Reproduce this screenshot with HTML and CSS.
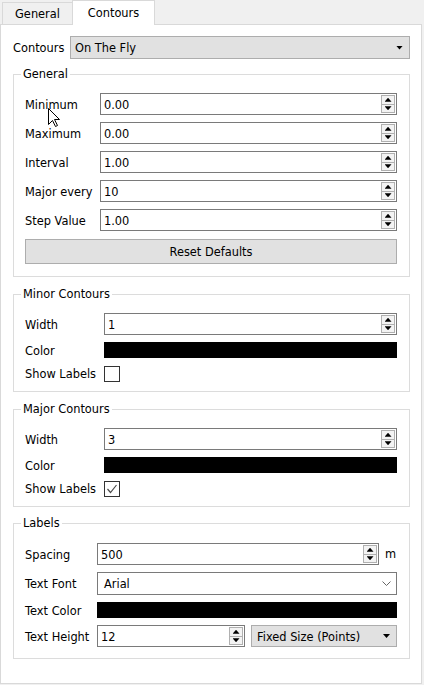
FILE: index.html
```html
<!DOCTYPE html>
<html>
<head>
<meta charset="utf-8">
<link rel="stylesheet" href="styles.css">
</head>
<body>
<div class="window">
  <div class="tabbar">
    <div class="tab">General</div>
    <div class="tab active">Contours</div>
  </div>
  <div class="panel">
    <div class="toprow">
      <span class="toplabel">Contours</span>
      <div class="combo gray">
        <span class="ctext">On The Fly</span>
        <span class="darrow"></span>
      </div>
    </div>

    <div class="group g-general">
      <div class="gtitle"><span>General</span></div>
      <div class="rows c75">
        <span class="lbl">Minimum</span>
        <div class="spin"><span class="val">0.00</span><span class="btns"><span class="b"><i class="up"></i></span><span class="b"><i class="dn"></i></span></span></div>
        <span class="lbl">Maximum</span>
        <div class="spin"><span class="val">0.00</span><span class="btns"><span class="b"><i class="up"></i></span><span class="b"><i class="dn"></i></span></span></div>
        <span class="lbl">Interval</span>
        <div class="spin"><span class="val">1.00</span><span class="btns"><span class="b"><i class="up"></i></span><span class="b"><i class="dn"></i></span></span></div>
        <span class="lbl">Major every</span>
        <div class="spin"><span class="val">10</span><span class="btns"><span class="b"><i class="up"></i></span><span class="b"><i class="dn"></i></span></span></div>
        <span class="lbl">Step Value</span>
        <div class="spin"><span class="val">1.00</span><span class="btns"><span class="b"><i class="up"></i></span><span class="b"><i class="dn"></i></span></span></div>
      </div>
      <div class="button">Reset Defaults</div>
    </div>

    <div class="group g-minor">
      <div class="gtitle"><span>Minor Contours</span></div>
      <div class="rows c79 mixed">
        <span class="lbl">Width</span>
        <div class="spin"><span class="val">1</span><span class="btns"><span class="b"><i class="up"></i></span><span class="b"><i class="dn"></i></span></span></div>
        <span class="lbl">Color</span>
        <div class="colorbar"></div>
        <span class="lbl">Show Labels</span>
        <div class="cbwrap"><span class="checkbox"></span></div>
      </div>
    </div>

    <div class="group g-major">
      <div class="gtitle"><span>Major Contours</span></div>
      <div class="rows c79 mixed">
        <span class="lbl">Width</span>
        <div class="spin"><span class="val">3</span><span class="btns"><span class="b"><i class="up"></i></span><span class="b"><i class="dn"></i></span></span></div>
        <span class="lbl">Color</span>
        <div class="colorbar"></div>
        <span class="lbl">Show Labels</span>
        <div class="cbwrap"><span class="checkbox"><svg width="14" height="14" viewBox="0 0 14 14"><polyline points="2.5,7 5.5,10.5 11.5,3" fill="none" stroke="#4a4a4a" stroke-width="1.2"/></svg></span></div>
      </div>
    </div>

    <div class="group g-labels">
      <div class="gtitle"><span>Labels</span></div>
      <div class="rows c72 lrows">
        <span class="lbl">Spacing</span>
        <div class="withunit">
          <div class="spin"><span class="val">500</span><span class="btns"><span class="b"><i class="up"></i></span><span class="b"><i class="dn"></i></span></span></div>
          <span class="unit">m</span>
        </div>
        <span class="lbl">Text Font</span>
        <div class="combo white">
          <span class="ctext">Arial</span>
          <svg class="chev" width="9" height="6" viewBox="0 0 9 6"><polyline points="0.5,0.5 4.5,4.5 8.5,0.5" fill="none" stroke="#666" stroke-width="1"/></svg>
        </div>
        <span class="lbl">Text Color</span>
        <div class="colorbar"></div>
        <span class="lbl">Text Height</span>
        <div class="pair">
          <div class="spin short"><span class="val">12</span><span class="btns"><span class="b"><i class="up"></i></span><span class="b"><i class="dn"></i></span></span></div>
          <div class="combo gray small">
            <span class="ctext">Fixed Size (Points)</span>
            <span class="darrow"></span>
          </div>
        </div>
      </div>
    </div>
  </div>

  <svg class="cursor" width="13" height="20" viewBox="0 0 13 20">
    <path d="M0.5,0.5 L0.5,16.5 L4.5,12.5 L7.5,18.5 L9.5,17.5 L6.5,11.5 L11.5,11.5 Z" fill="#fff" stroke="#000" stroke-width="1" stroke-linejoin="miter"/>
  </svg>
</div>
</body>
</html>
```

FILE: styles.css
```css
* { box-sizing: border-box; }
html, body { margin: 0; padding: 0; }
body {
  background: #f0f0f0;
  font-family: "DejaVu Sans", Verdana, sans-serif;
  font-size: 11.4px;
  color: #000;
}
.window {
  width: 424px;
  height: 685px;
  position: relative;
  overflow: hidden;
}

/* tabs */
.tabbar {
  display: flex;
  align-items: flex-end;
  height: 24px;
  padding-left: 2px;
}
.tab {
  width: 71px;
  height: 22px;
  border: 1px solid #d9d9d9;
  border-bottom: none;
  background: #f0f0f0;
  display: flex;
  align-items: center;
  justify-content: center;
  padding-top: 1px;
}
.tab.active {
  width: 83px;
  height: 25px;
  margin-left: -1px;
  margin-bottom: -1px;
  background: #fff;
  position: relative;
  z-index: 1;
  padding-top: 0;
  padding-bottom: 1px;
}

/* panel */
.panel {
  width: 422px;
  height: 660px;
  background: #fff;
  border: 1px solid #d9d9d9;
  padding: 11px 11px 0 12px;
}
.toprow {
  display: flex;
  align-items: center;
  height: 23px;
}
.toplabel { width: 57px; padding-top: 1px; }

.combo {
  display: flex;
  align-items: center;
  justify-content: space-between;
  height: 23px;
  padding-left: 4px;
  padding-right: 6px;
}
.ctext { padding-top: 1px; }
.toprow .combo { flex: 1; }
.combo.gray {
  background: #e1e1e1;
  border: 1px solid #adadad;
}
.combo.white {
  background: #fff;
  border: 1px solid #7a7a7a;
  height: 23px;
  padding-left: 6px;
  padding-right: 5px;
}
.darrow {
  width: 7px;
  height: 4px;
  background: #000;
  clip-path: polygon(0 0, 100% 0, 50% 100%);
}

/* groups */
.group {
  border: 1px solid #dcdcdc;
  padding: 0 12px 12px 11px;
}
.g-general { margin-top: 15px; }
.g-minor { margin-top: 17px; padding-bottom: 9px; }
.g-major { margin-top: 17px; padding-bottom: 9px; }
.g-labels { margin-top: 16px; padding-bottom: 11px; }

.gtitle {
  height: 14px;
  line-height: 14px;
  margin-top: -8px;
  margin-bottom: 12px;
  margin-left: -4px;
}
.g-labels .gtitle { margin-bottom: 13px; }
.gtitle span {
  background: #fff;
  padding: 0 2px;
}

.rows {
  display: grid;
  row-gap: 7px;
  align-items: center;
}
.c75 { grid-template-columns: 75px 1fr; }
.c79 { grid-template-columns: 79px 1fr; }
.c72 { grid-template-columns: 72px 1fr; }
.mixed .cbwrap { margin-top: 1px; }
.lbl { white-space: nowrap; padding-top: 1px; }

/* spin box */
.spin {
  height: 22px;
  border: 1px solid #7a7a7a;
  background: #fff;
  display: flex;
  align-items: center;
  justify-content: space-between;
  padding-left: 3px;
}
.val { padding-top: 1px; }
.btns {
  width: 14px;
  height: 18px;
  margin-right: 1px;
  display: flex;
  flex-direction: column;
  border: 1px solid #b0b0b0;
  background: #f3f3f3;
}
.btns .b {
  flex: 1;
  display: flex;
  align-items: center;
  justify-content: center;
}
.btns .b + .b { border-top: 1px solid #b0b0b0; }
.up, .dn {
  display: block;
  width: 7px;
  height: 4px;
  background: #000;
}
.up { clip-path: polygon(50% 0, 100% 100%, 0 100%); }
.dn { clip-path: polygon(0 0, 100% 0, 50% 100%); }

/* button */
.button {
  margin-top: 8px;
  height: 25px;
  background: #e1e1e1;
  border: 1px solid #adadad;
  display: flex;
  align-items: center;
  justify-content: center;
  padding-top: 1px;
}

.colorbar {
  height: 16px;
  background: #000;
}

.cbwrap { display: flex; }
.checkbox {
  width: 16px;
  height: 16px;
  border: 1px solid #333;
  background: #fff;
  display: flex;
  align-items: center;
  justify-content: center;
}

.withunit {
  display: flex;
  align-items: center;
}
.withunit .spin { flex: 1; }
.unit {
  width: 18px;
  padding-left: 6px;
}
.pair {
  display: flex;
  gap: 6px;
}
.spin.short { width: 148px; }
.combo.small {
  flex: 1;
  height: 22px;
  padding-left: 5px;
  padding-right: 6px;
}

.cursor {
  position: absolute;
  left: 48px;
  top: 108px;
}
```
